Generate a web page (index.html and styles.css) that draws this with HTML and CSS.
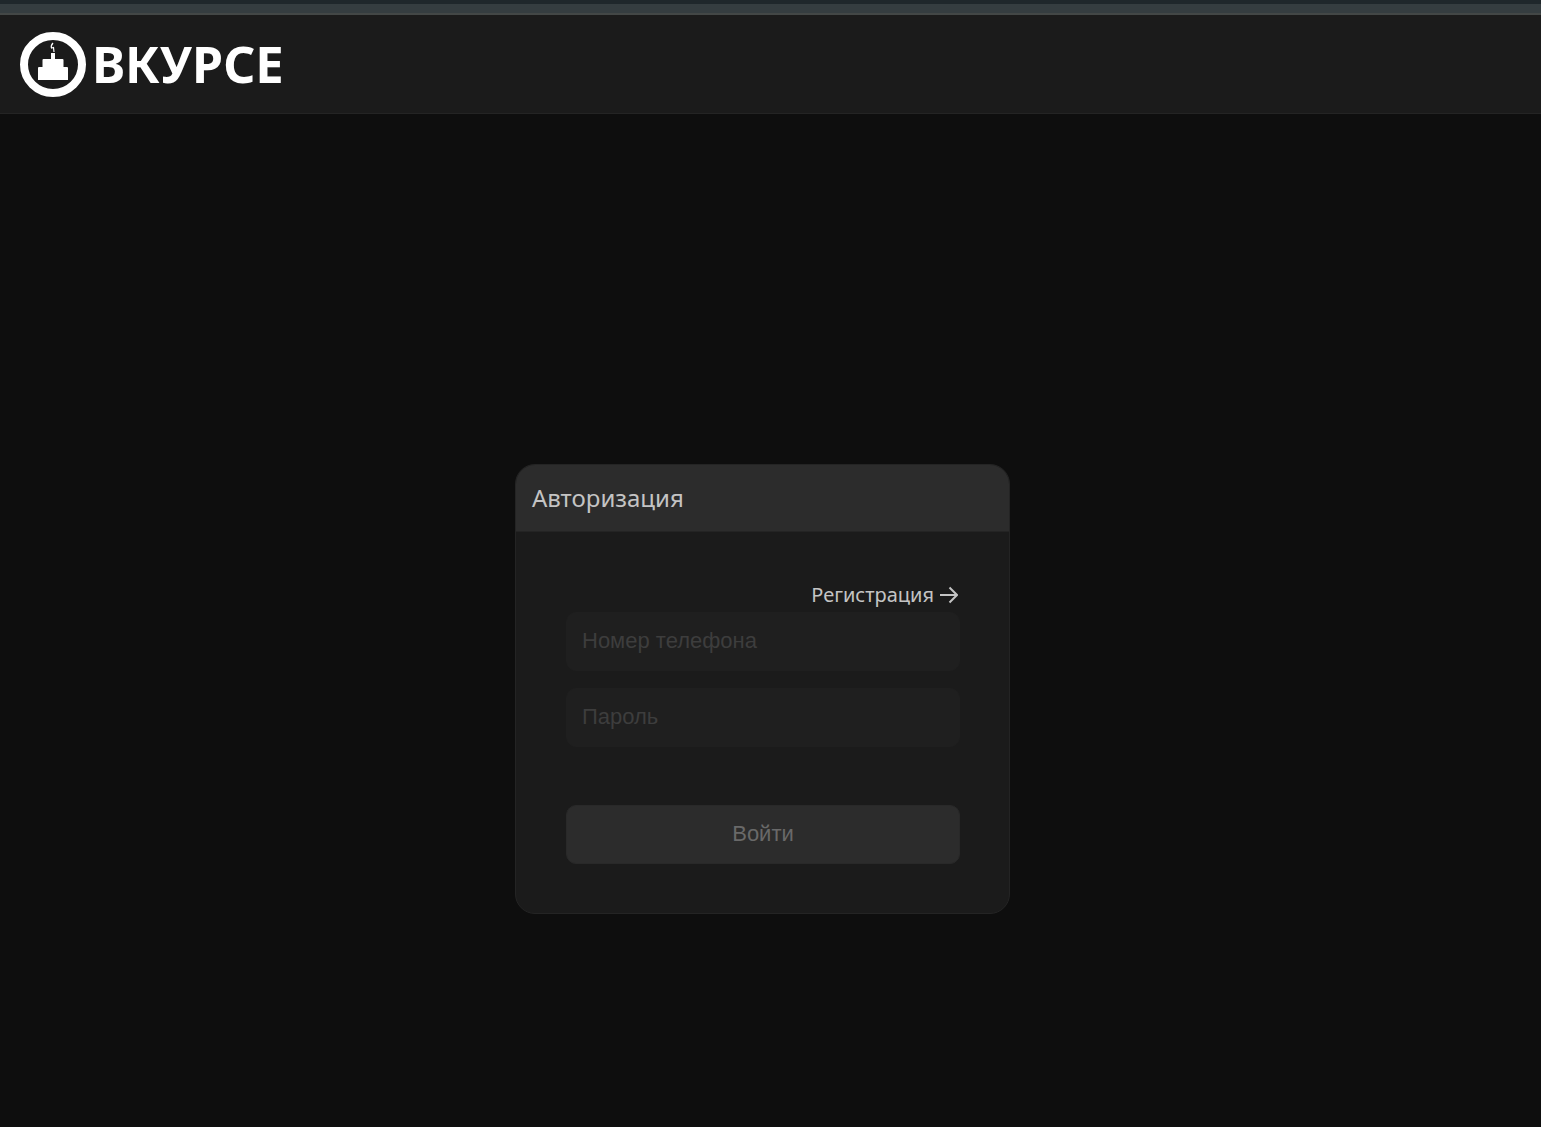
FILE: index.html
```html
<!DOCTYPE html>
<html lang="ru">
<head>
<meta charset="utf-8">
<meta name="viewport" content="width=device-width, initial-scale=1">
<title>ВКУРСЕ — Авторизация</title>
<link rel="stylesheet" href="styles.css">
</head>
<body>
<div class="window-edge"></div>
<header class="header">
  <a class="brand" href="#">
    <svg class="brand-icon" viewBox="0 0 66 66" aria-hidden="true">
      <ellipse cx="33" cy="33.500" rx="29" ry="28.500" fill="none" stroke="#fff" stroke-width="8"/>
      <path fill="#fff" d="M18 37q0-1 1-1h3.500v-7q0-1 1-1H31v-6h4v6h7.500q1 0 1 1v7H47q1 0 1 1v12H18z"/>
      <path fill="none" stroke="#fff" stroke-width="1.200" d="M33 12Q30.500 15 31.500 17L33.500 16.500L34 21"/>
    </svg>
    <span class="brand-name">ВКУРСЕ</span>
  </a>
</header>
<main class="main">
  <section class="card">
    <h1 class="card-title">Авторизация</h1>
    <form class="form">
      <a class="register" href="#">Регистрация
        <svg class="arrow" viewBox="0 0 18 18" aria-hidden="true"><path d="M0 9h17M9.500 1.500L17 9l-7.500 7.500"/></svg>
      </a>
      <div class="fields">
        <input class="field" type="tel" placeholder="Номер телефона" aria-label="Номер телефона">
        <input class="field" type="password" placeholder="Пароль" aria-label="Пароль">
      </div>
      <button class="submit" type="submit">Войти</button>
    </form>
  </section>
</main>
</body>
</html>
```
FILE: styles.css
```css
* {
  box-sizing: border-box;
}

body {
  display: flex;
  flex-direction: column;
  min-height: 100vh;
  margin: 0;
  background: #0e0e0e;
  color: #c4c4c4;
  font-family: "Noto Sans", "Open Sans", sans-serif;
}

.window-edge {
  height: 15px;
  background: #353d40;
  border-top: 4px solid #1f272b;
  border-bottom: 2px solid #434746;
}

.header {
  padding: 16px 20px;
  background: #1b1b1b;
  border-bottom: 1px solid #242424;
}

.brand {
  display: flex;
  align-items: center;
  gap: 6px;
  width: fit-content;
  color: #fff;
  text-decoration: none;
}

.brand-icon {
  width: 66px;
  height: 66px;
}

.brand-name {
  font-size: 50px;
  font-weight: 700;
  line-height: 66px;
}

.main {
  flex: 1;
  padding: 350px 16px 16px 0;
}

.card {
  width: 100%;
  max-width: 495px;
  margin: 0 auto;
  overflow: hidden;
  background: #1b1b1b;
  border: 1px solid #242424;
  border-radius: 20px;
}

.card-title {
  margin: 0;
  padding: 16px;
  background: #2c2c2c;
  border-bottom: 1px solid #242424;
  font-size: 24px;
  font-weight: 400;
  line-height: 34px;
}

.form {
  display: flex;
  flex-direction: column;
  padding: 48px 49px 49px 50px;
}

.register {
  display: flex;
  align-items: center;
  align-self: flex-end;
  gap: 6px;
  padding: 0 2px 2px 0;
  color: #c4c4c4;
  font-size: 20px;
  line-height: 30px;
  text-decoration: none;
}

.arrow {
  width: 18px;
  height: 18px;
  fill: none;
  stroke: currentColor;
  stroke-width: 2;
}

.fields {
  display: grid;
  gap: 17px;
  margin-bottom: 58px;
}

.field,
.submit {
  width: 100%;
  height: 59px;
  padding: 0 15px 2px;
  border: 1px solid #1f1f1f;
  border-radius: 10px;
  font-family: "Liberation Sans", Arial, sans-serif;
  font-size: 22px;
}

.field {
  background: #1f1f1f;
  color: #c4c4c4;
}

.field::placeholder {
  color: #3d3d3d;
  opacity: 1;
}

.submit {
  background: #2c2c2c;
  border-color: #292929;
  color: #696969;
}
```
